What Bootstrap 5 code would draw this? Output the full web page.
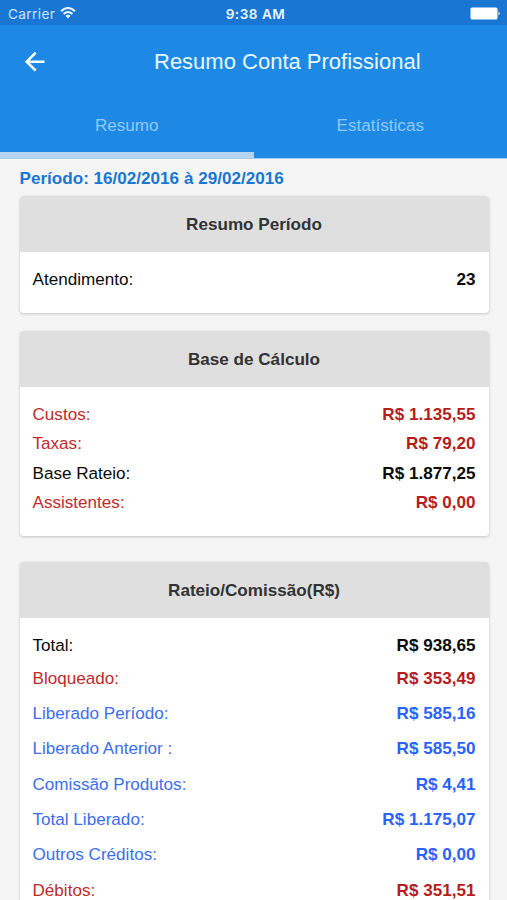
<!DOCTYPE html>
<html lang="pt-BR">
<head>
<meta charset="utf-8">
<meta name="viewport" content="width=device-width, initial-scale=1">
<title>Resumo Conta Profissional</title>
<link href="https://cdn.jsdelivr.net/npm/bootstrap@5.3.0/dist/css/bootstrap.min.css" rel="stylesheet">
<style>
body{font-family:"Liberation Sans",Arial,sans-serif;font-size:17.1px;line-height:20px;background:#f5f5f5;color:#0a0a0a}
.screen{height:900px}
.statusbar{height:25px;background:#1976d2;font-family:Inter,sans-serif;font-size:13.6px;padding:2px 6px 0 8px;color:#e9f7ff}
.statusbar .side{flex:1 1 0}
.clock{font-weight:600;letter-spacing:.5px;padding-left:2px}
.carrier{letter-spacing:.4px;color:#c9e6fb}
.appbar{height:73px;background:#1e88e5;padding-left:24px}
.screen-title{font-size:22px;line-height:26px;color:#e8f8ff;margin-left:108px}
.tabs{height:61px;background:#1e88e5;border-bottom:1px solid #a9cdf0}
.tab-item{color:#90caf9;padding-top:2px;border-bottom:6px solid transparent}
.tab-item.current{border-bottom-color:#b4d4f3}
.content{padding:10px 18.5px 0 19.5px}
.period{color:#1976d2;margin-bottom:7px}
.panel{border:0;border-radius:4px;box-shadow:0 1px 3px rgba(0,0,0,.2);background:#fff}
.panel-title{height:56px;background:#dfdfdf;color:#333;border-radius:4px 4px 0 0;padding-top:2px}
.panel-rows{padding:13.5px 13px 18px}
#base{margin-top:18px}
#rateio{margin-top:26px}
.line{height:29.4px}
.roomy .line{height:35.4px}
.roomy .line:first-child{height:29.4px}
.debit{color:#b71c1c}
.credit{color:#2962ff}
.debit .label{color:#c02a2a}
.credit .label{color:#3b6df0}
</style>
<script src="https://cdn.jsdelivr.net/npm/bootstrap@5.3.0/dist/js/bootstrap.bundle.min.js"></script>
</head>
<body>
<div class="screen overflow-hidden">
  <header>
    <div class="statusbar d-flex align-items-center">
      <div class="side d-flex align-items-center">
        <span class="carrier">Carrier</span>
        <svg class="ms-1" width="18" height="14" viewBox="0 0 18 14" fill="none" stroke="#e9f7ff" stroke-width="2"><path d="M2 4.2Q9 -2.2 16 4.2M4.6 7Q9 3 13.4 7"/><path d="M6.5 8.8Q9 6.8 11.5 8.8L9 11.4Z" fill="#e9f7ff" stroke="none"/></svg>
      </div>
      <span class="clock">9:38 AM</span>
      <div class="side d-flex justify-content-end">
        <svg width="31" height="13" viewBox="0 0 31 13"><rect x="0.5" y="0.5" width="27" height="12" rx="1.5" fill="#fff"/><path d="M28.5 4.5Q31 6.5 28.5 8.5Z" fill="#fff"/></svg>
      </div>
    </div>
    <div class="appbar d-flex align-items-center">
      <svg width="22" height="22" viewBox="0 0 22 22" fill="none" stroke="#fff" stroke-width="2.6"><path d="M20.5 10.7H3M11.7 1.7L2.7 10.7L11.7 19.7"/></svg>
      <h1 class="screen-title mb-0 fw-normal">Resumo Conta Profissional</h1>
    </div>
    <nav class="tabs d-flex">
      <div class="tab-item current w-50 d-flex align-items-center justify-content-center">Resumo</div>
      <div class="tab-item w-50 d-flex align-items-center justify-content-center">Estatísticas</div>
    </nav>
  </header>
  <main class="content">
    <p class="period fw-bold">Período: 16/02/2016 à 29/02/2016</p>
    <section class="panel" id="periodo">
      <div class="panel-title fw-bold d-flex align-items-center justify-content-center">Resumo Período</div>
      <div class="panel-rows">
        <div class="line d-flex align-items-center justify-content-between"><span class="label">Atendimento:</span><b>23</b></div>
      </div>
    </section>
    <section class="panel" id="base">
      <div class="panel-title fw-bold d-flex align-items-center justify-content-center">Base de Cálculo</div>
      <div class="panel-rows">
        <div class="line debit d-flex align-items-center justify-content-between"><span class="label">Custos:</span><b>R$ 1.135,55</b></div>
        <div class="line debit d-flex align-items-center justify-content-between"><span class="label">Taxas:</span><b>R$ 79,20</b></div>
        <div class="line d-flex align-items-center justify-content-between"><span class="label">Base Rateio:</span><b>R$ 1.877,25</b></div>
        <div class="line debit d-flex align-items-center justify-content-between"><span class="label">Assistentes:</span><b>R$ 0,00</b></div>
      </div>
    </section>
    <section class="panel" id="rateio">
      <div class="panel-title fw-bold d-flex align-items-center justify-content-center">Rateio/Comissão(R$)</div>
      <div class="panel-rows roomy">
        <div class="line d-flex align-items-center justify-content-between"><span class="label">Total:</span><b>R$ 938,65</b></div>
        <div class="line debit d-flex align-items-center justify-content-between"><span class="label">Bloqueado:</span><b>R$ 353,49</b></div>
        <div class="line credit d-flex align-items-center justify-content-between"><span class="label">Liberado Período:</span><b>R$ 585,16</b></div>
        <div class="line credit d-flex align-items-center justify-content-between"><span class="label">Liberado Anterior :</span><b>R$ 585,50</b></div>
        <div class="line credit d-flex align-items-center justify-content-between"><span class="label">Comissão Produtos:</span><b>R$ 4,41</b></div>
        <div class="line credit d-flex align-items-center justify-content-between"><span class="label">Total Liberado:</span><b>R$ 1.175,07</b></div>
        <div class="line credit d-flex align-items-center justify-content-between"><span class="label">Outros Créditos:</span><b>R$ 0,00</b></div>
        <div class="line debit d-flex align-items-center justify-content-between"><span class="label">Débitos:</span><b>R$ 351,51</b></div>
      </div>
    </section>
  </main>
</div>
</body>
</html>
